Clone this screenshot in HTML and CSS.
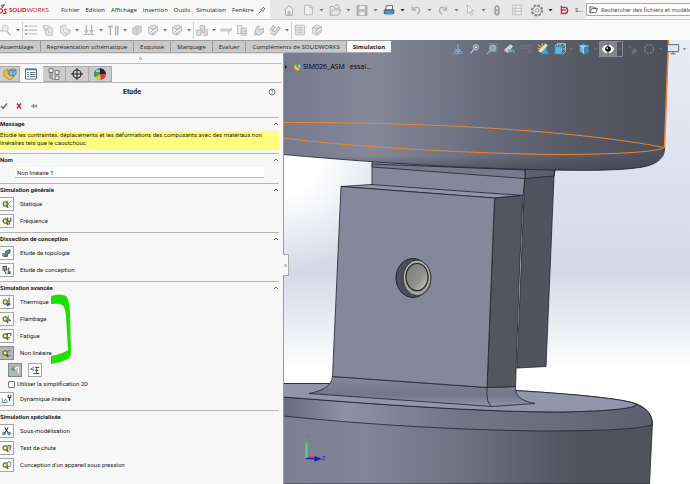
FILE: index.html
```html
<!DOCTYPE html>
<html lang="fr">
<head>
<meta charset="utf-8">
<title>SOLIDWORKS - Simulation</title>
<link rel="stylesheet" href="styles.css">
</head>
<body>
<svg class="defs" aria-hidden="true">
  <symbol id="caret" viewBox="0 0 8 8"><path d="M2 3h4L4 5.500z" fill="currentColor"/></symbol>
  <symbol id="chev" viewBox="0 0 6 6"><path d="M1 4l2-2 2 2" fill="none" stroke="#555" stroke-width=".9"/></symbol>
  <symbol id="cube" viewBox="0 0 16 16"><path d="M3 6l4-3 6 1v6l-5 4-5-2z" fill="#d3d3d3" stroke="#c4c4c4"/><path d="M3 6l5 1 5-3M8 7v7" fill="none" stroke="#b8b8b8" stroke-width=".7"/></symbol>
  <symbol id="cubetool" viewBox="0 0 16 16"><path d="M3 5l5-3 5 2v6l-5 4-5-2z" fill="#e4e4e4" stroke="#bbb"/><path d="M3 5l5 2 5-3M8 7v7" fill="none" stroke="#b4b4b4"/><path d="M6 10l6-5 1.500 2-6 5z" fill="#f8f8f8" stroke="#a4a4a4" stroke-width=".8"/></symbol>
  <symbol id="mag" viewBox="0 0 14 14"><circle cx="5.500" cy="7" r="2.500" fill="#e8ef63" stroke="#525d20" stroke-width="1.200"/><path d="M7 9l2 2.500" stroke="#394028" stroke-width="1.500"/></symbol>
</svg>
<div class="app">
  <header class="titlebar">
    <div class="brand">
      <svg class="ds" viewBox="0 0 8 12"><path d="M1 2l3-1-2 3M0 5c4-1 3 5-1 4M7 5c-4 0-2 2-1 3s-1 2-3 1" fill="none" stroke="#c8242f" stroke-width="1.100"/></svg>
      <span class="name"><b>SOLID</b>WORKS</span>
    </div>
    <nav class="menu">
      <a href="#">Fichier</a><a href="#">Edition</a><a href="#">Affichage</a><a href="#">Insertion</a><a href="#">Outils</a><a href="#">Simulation</a><a href="#">Fenêtre</a>
    </nav>
    <svg class="pin" viewBox="0 0 8 8"><path d="M1 7l2.500-2.500M2.500 3l2.500 2.500M3 3.500L5.500 1.500M4.500 5L6.800 2.800M5 1l2 2" stroke="#666" fill="none"/></svg>
    <div class="quick">
      <button class="ib" aria-label="Accueil"><svg viewBox="0 0 16 16"><path d="M2.500 8L8 3l5.500 5M4 8v6h8V8M7 14v-4h2v4" fill="#eee" stroke="#a4a4a4"/></svg></button>
      <span class="space"></span>
      <button class="ib" aria-label="Nouveau"><svg viewBox="0 0 16 16"><path d="M4 2.500h6l3 3v8H4zM10 2.500v3h3" fill="#efefef" stroke="#b0b0b0"/></svg></button><svg class="ca"><use href="#caret"/></svg>
      <button class="ib" aria-label="Ouvrir"><svg viewBox="0 0 16 16"><path d="M2.500 14V4h4l1 2h5v2M2.500 14l3-6h9l-3 6zM8 3c4-2 5 0 5 3" fill="none" stroke="#a8a8a8"/></svg></button><svg class="ca"><use href="#caret"/></svg>
      <button class="ib" aria-label="Enregistrer"><svg viewBox="0 0 16 16"><path d="M2.500 3h11v11h-11z" fill="#b9b9b9" stroke="#999"/><path d="M5 3h6v4H5zM5 10h6v4H5z" fill="#eee"/></svg></button><svg class="ca"><use href="#caret"/></svg>
      <button class="ib" aria-label="Imprimer"><svg viewBox="0 0 16 16"><path d="M5 3h7v5H4z" fill="#fff" stroke="#555"/><path d="M2.500 8h11v4h-11z" fill="#5795b6" stroke="#304f61"/><path d="M4 12h9l-1 2H3z" fill="#80c6dc"/></svg></button><svg class="ca dark"><use href="#caret"/></svg>
      <button class="ib" aria-label="Annuler"><svg viewBox="0 0 16 16"><path d="M4 4v4h4M4 8c2-4 8-4 8 0 0 2-1 4-3 5" fill="none" stroke="#b2b2b2" stroke-width="1.600"/></svg></button><svg class="ca"><use href="#caret"/></svg>
      <button class="ib" aria-label="Rétablir"><svg viewBox="0 0 16 16"><path d="M12 4v4H8M12 8C10 4 4 4 4 8c0 2 1 4 3 5" fill="none" stroke="#b2b2b2" stroke-width="1.600"/></svg></button><svg class="ca"><use href="#caret"/></svg>
      <button class="ib" aria-label="Sélectionner"><svg viewBox="0 0 16 16"><path d="M5 2v10l2.500-2 2 4 1.500-1-2-4h3z" fill="#f4f4f4" stroke="#b0b0b0"/></svg></button><svg class="ca"><use href="#caret"/></svg>
      <button class="ib" aria-label="Reconstruire"><svg viewBox="0 0 16 16"><rect x="5.500" y="3" width="5" height="11" rx="2.500" fill="#aaa" stroke="#999"/><circle cx="8" cy="6" r="1.300" fill="#ddd"/><circle cx="8" cy="10.500" r="1.300" fill="#ddd"/></svg></button>
      <button class="ib gap" aria-label="Propriétés"><svg viewBox="0 0 16 16"><path d="M3 2.500h10v11H3zM3 6h10M3 9.500h10M6 3v10" fill="#eee" stroke="#bcbcbc"/></svg></button>
      <button class="ib gap" aria-label="Options"><svg viewBox="0 0 16 16"><circle cx="8" cy="8.500" r="6" fill="none" stroke="#777" stroke-width="1.800" stroke-dasharray="2.600 2.110"/><circle cx="8" cy="8.500" r="4.900" fill="#eee" stroke="#777" stroke-width=".8"/><circle cx="8" cy="8.500" r="2.100" fill="#fff" stroke="#777" stroke-width=".8"/></svg></button><svg class="ca dark"><use href="#caret"/></svg>
      <button class="ib" aria-label="Mises à jour"><svg viewBox="0 0 16 16"><path d="M5 5h4c4 0 4 7 0 7H5zM7 8h3M5 3v5h4" fill="none" stroke="#c9303b" stroke-width="1.600"/><path d="M10 5c3 2 3 5 0 7" fill="none" stroke="#555" stroke-width=".8"/></svg></button>
      <span class="doc">S...</span>
    </div>
    <label class="search">
      <svg viewBox="0 0 10 10"><path d="M1 8.500V2h3l1 1.200h3V4M1 8.500L3 4h6.500L7.500 8.500z" fill="#fff" stroke="#444" stroke-width=".9"/></svg>
      <input type="text" aria-label="Recherche" placeholder="Rechercher des fichiers et modèles">
    </label>
  </header>

  <div class="ribbon">
    <button class="ib first" aria-label="Conseiller"><svg viewBox="0 0 16 16"><circle cx="7" cy="6" r="3.500" fill="#eee" stroke="#bbb"/><path d="M9 9l4 5M1 9h4" stroke="#bbb" stroke-width="1.500"/></svg></button><svg class="ca"><use href="#caret"/></svg>
    <i class="bar"></i>
    <button class="ib" aria-label="Liste"><svg viewBox="0 0 16 16"><path d="M1 3.500h3M1 8h3M1 12.500h3" stroke="#aaa" stroke-width="2"/><path d="M5.500 3.500H15M5.500 8H15M5.500 12.500H15" stroke="#c4c4c4" stroke-width="1.500"/></svg></button>
    <button class="ib sp" aria-label="Appliquer"><svg viewBox="0 0 16 16"><path d="M3 3h5l5 3v8H6z" fill="#e8e8e8" stroke="#bbb"/><path d="M2 4l4 5 3-4M8 10l3 1" stroke="#aaa" fill="none"/></svg></button>
    <button class="ib sp" aria-label="Pièce"><svg viewBox="0 0 16 16"><path d="M3 4l4-2 2 1v4l5 1v3l-6 4-5-4z" fill="#ececec" stroke="#bbb"/><path d="M3 4l3 2v4l3 2 5-4M9 12v3" fill="none" stroke="#c4c4c4"/></svg></button><svg class="ca"><use href="#caret"/></svg>
    <button class="ib" aria-label="Chargements"><svg viewBox="0 0 16 16"><path d="M5 2v9M11 2v9M3 8l2 3 2-3M9 8l2 3 2-3M2 13h12" fill="none" stroke="#b5b5b5" stroke-width="1.400"/></svg></button><svg class="ca"><use href="#caret"/></svg>
    <button class="ib" aria-label="Déplacements"><svg viewBox="0 0 16 16"><path d="M2 4h6M5 4v10M11 3v11M13.500 3v11" stroke="#b0b0b0" stroke-width="1.600"/></svg></button><svg class="ca"><use href="#caret"/></svg>
    <button class="ib" aria-label="Connexions"><svg><use href="#cube"/></svg></button>
    <button class="ib" aria-label="Coque"><svg><use href="#cubetool"/></svg></button><svg class="ca"><use href="#caret"/></svg>
    <button class="ib" aria-label="Maillage"><svg><use href="#cubetool"/></svg></button><svg class="ca"><use href="#caret"/></svg>
    <i class="bar"></i>
    <button class="ib" aria-label="Exécuter"><svg viewBox="0 0 16 16"><path d="M2 8h5v6H2zM6 3h5v8H8V7H6zM10 7h4v7H9" fill="#ddd" stroke="#b5b5b5"/></svg></button><svg class="ca"><use href="#caret"/></svg>
    <button class="ib" aria-label="Résultats"><svg viewBox="0 0 16 16"><path d="M2 7h10l2-1v3H2zM11 9v4" fill="#ddd" stroke="#bbb"/></svg></button>
    <button class="ib" aria-label="Comparer"><svg viewBox="0 0 16 16"><path d="M3 3h5v9H3zM7 6h6v8H7zM9 9h3v3H9z" fill="#eee" stroke="#b5b5b5"/></svg></button>
    <button class="ib sp" aria-label="Déformée"><svg viewBox="0 0 16 16"><path d="M3 12l2-7 3-2v5l5-2v5l-5 3zM2 14l4-1" fill="#ddd" stroke="#aaa"/></svg></button>
    <button class="ib" aria-label="Tracés"><svg viewBox="0 0 16 16"><path d="M2 8l4-5 2 2-3 4 3 1 4-6 2 2-6 8-5-2" fill="#ddd" stroke="#a5a5a5"/></svg></button><svg class="ca"><use href="#caret"/></svg>
    <i class="bar"></i>
    <button class="ib" aria-label="Rapport"><svg viewBox="0 0 16 16"><path d="M3 2.500h10v11H3zM5 5h6M5 7h6M5 9h6M5 11h6M2 4h2M2 7h2M2 10h2" fill="#eee" stroke="#b5b5b5"/></svg></button>
    <button class="ib sp" aria-label="Inclure l'image"><svg><use href="#cubetool"/></svg></button>
  </div>

  <div class="work">
    <nav class="tabs">
      <a href="#">Assemblage</a><a href="#">Représentation schématique</a><a href="#">Esquisse</a><a href="#">Marquage</a><a href="#">Evaluer</a><a href="#">Compléments de SOLIDWORKS</a><a href="#" class="on">Simulation</a>
    </nav>

    <aside class="panel">
      <div class="grip"><i></i></div>
      <div class="ptabs">
        <button aria-label="Arbre"><svg viewBox="0 0 14 14"><path d="M1 4l4-2v5l3 1 3-1v3l-4 3-6-4z" fill="#eec53e" stroke="#9c7c19" stroke-width=".7"/><path d="M6 3l4-1 3 1v4l-3 2-4-1z" fill="#83c0d8" stroke="#38708a" stroke-width=".7"/><path d="M6 3l4 1 3-1M10 4v5" fill="none" stroke="#38708a" stroke-width=".6"/></svg></button>
        <button class="on" aria-label="Propriétés"><svg viewBox="0 0 14 14"><path d="M1.500 2h11v10h-11z" fill="#fff" stroke="#55728a"/><path d="M1.500 2.500h11" stroke="#55728a" stroke-width="1.500"/><path d="M3 5.500h2M3 7.500h2M3 9.500h2" stroke="#3b8fc0"/><path d="M6 5.500h5.500M6 7.500h5.500M6 9.500h5.500" stroke="#65747e"/></svg></button>
        <button aria-label="Configurations"><svg viewBox="0 0 14 14"><path d="M2 1.500h4v4H2zM8 3.500h4v4H8zM8 9h4v3.500H8zM3 6v5M5 6v6h3M3 11h2" fill="#e8e8e8" stroke="#777"/></svg></button>
        <button aria-label="Cotation"><svg viewBox="0 0 14 14"><circle cx="7" cy="7" r="4" fill="none" stroke="#222" stroke-width="1.100"/><path d="M7 1v12M1 7h12" stroke="#222"/></svg></button>
        <button aria-label="Apparence"><svg viewBox="0 0 14 14"><circle cx="7" cy="7" r="5.800" fill="#2f65b5"/><path d="M7 7V1.200A5.800 5.800 0 0 1 12.800 7z" fill="#252525"/><path d="M7 7h5.800A5.800 5.800 0 0 1 8 12.700z" fill="#d63d36"/><path d="M7 7l1 5.700A5.800 5.800 0 0 1 2 10z" fill="#e9c22e"/><path d="M7 7L2 10A5.800 5.800 0 0 1 3 3z" fill="#3d9f48"/><ellipse cx="5" cy="4" rx="2" ry="1.300" fill="#b2d4ee"/></svg></button>
      </div>
      <div class="ptitle"><h1>Etude</h1><button aria-label="Aide"><svg viewBox="0 0 8 8"><circle cx="4" cy="4" r="3" fill="#fff" stroke="#49677a" stroke-width=".8"/><path d="M3 3.200c0-1.400 2-1.400 2 0 0 .8-1 .7-1 1.600M4 5.400v.7" stroke="#49677a" stroke-width=".8" fill="none"/></svg></button></div>
      <div class="confirm">
        <button aria-label="OK"><svg viewBox="0 0 8 8"><path d="M1 4l2 2.500L7 1.500" fill="none" stroke="#378c2b" stroke-width="1.300"/></svg></button>
        <button aria-label="Annuler"><svg viewBox="0 0 8 8"><path d="M2 1.500l4 5M6 1.500l-4 5" stroke="#c22a25" stroke-width="1.400"/></svg></button>
        <button aria-label="Garder visible"><svg viewBox="0 0 8 8"><path d="M1 4h2.500M3.500 2v4M3.500 4h3M6.500 2.500v3" stroke="#666" stroke-width=".9" fill="none"/></svg></button>
      </div>

      <section><h2>Message<svg><use href="#chev"/></svg></h2>
        <p class="msg">Etudie les contraintes, déplacements et les déformations des composants avec des matériaux non linéraires tels que le caoutchouc</p></section>
      <section><h2><label for="nom">Nom</label><svg><use href="#chev"/></svg></h2>
        <input id="nom" class="nom" type="text" value="Non linéaire 1"></section>
      <section><h2>Simulation générale<svg><use href="#chev"/></svg></h2>
        <button class="row"><svg viewBox="0 0 14 14"><use href="#mag"/><path d="M8 3v8M8 7l4-3M9 7l3 3" stroke="#397c96" fill="none"/></svg>Statique</button>
        <button class="row"><svg viewBox="0 0 14 14"><use href="#mag"/><path d="M8.500 3v3.500q2 2 3.500 0V3M10.300 7v4" stroke="#343b46" stroke-width="1.200" fill="none"/></svg>Fréquence</button></section>
      <section><h2>Dissection de conception<svg><use href="#chev"/></svg></h2>
        <button class="row"><svg viewBox="0 0 14 14"><path d="M6 5l5-2v4l-3 1v3H5z" fill="#578e9f" stroke="#354c57"/><path d="M2.500 7.500l3 1-1 3-2-1z" fill="#b3bd99" stroke="#566"/></svg>Etude de topologie</button>
        <button class="row"><svg viewBox="0 0 14 14"><path d="M3 3h4v4H3zM4 7l3 5M9 5h2M9 5v6h3M11 8v3" fill="#aaa" stroke="#4b5055" stroke-width="1.200"/></svg>Etude de conception</button></section>
      <section><h2>Simulation avancée<svg><use href="#chev"/></svg></h2>
        <button class="row"><svg viewBox="0 0 14 14"><use href="#mag"/><path d="M10 2v6" stroke="#2c6297" stroke-width="1.500"/><circle cx="10" cy="9.500" r="1.500" fill="#2c6297"/></svg>Thermique</button>
        <button class="row"><svg viewBox="0 0 14 14"><use href="#mag"/><path d="M9 3v4l3 2M8 9h4" stroke="#397c96" stroke-width="1.200" fill="none"/></svg>Flambage</button>
        <button class="row"><svg viewBox="0 0 14 14"><use href="#mag"/><path d="M8 7V4h4v3M8 9h3" stroke="#345f79" stroke-width="1.200" fill="none"/></svg>Fatigue</button>
        <button class="row on"><svg viewBox="0 0 14 14"><use href="#mag"/><path d="M8 8c0-3 1-4 4-4M9 10h3" stroke="#4d7f90" stroke-width="1.200" fill="none"/></svg>Non linéaire</button>
        <div class="sub">
          <button class="on" aria-label="Statique"><svg viewBox="0 0 14 14"><path d="M3 6l3-3M3 6l3 2M3 6h4" stroke="#2e7c9c" fill="none"/><path d="M8 4h3v7M8 4v3" stroke="#eef6fa" stroke-width="1.500" fill="none"/></svg></button>
          <button aria-label="Dynamique"><svg viewBox="0 0 14 14"><path d="M2 6l4-3M2 6l4 2M2 6h4" stroke="#397c96" fill="none"/><path d="M7 4h5M7 7.500h4M5 11h7M9 4v7" stroke="#333" fill="none"/></svg></button>
        </div>
        <label class="check"><input type="checkbox">Utiliser la simplification 2D</label>
        <button class="row"><svg viewBox="0 0 14 14"><path d="M2 6v5h6M4 10l2-3 2 3" stroke="#397c96" fill="none"/><path d="M9 2v3q1.500 1 3 0V2M10.500 5v4" stroke="#333" stroke-width="1.200" fill="none"/></svg>Dynamique linéaire</button>
        <svg class="mark" viewBox="0 0 24 72"><path d="M1 2Q11-1 16 2Q20 7 20 20L21 58Q21 63 18 65Q10 69 1 70V62Q12 60 18 56L16 22Q15 12 12 11Q9 9 1 10z" fill="#20e000"/></svg>
      </section>
      <section><h2>Simulation spécialisée</h2>
        <button class="row"><svg viewBox="0 0 14 14"><path d="M5 3l4 6M9 3L5 9" stroke="#333" stroke-width="1.200"/><circle cx="4" cy="10" r="1.500" fill="#7fb8cf" stroke="#27617c"/><circle cx="10" cy="10" r="1.500" fill="#7fb8cf" stroke="#27617c"/></svg>Sous-modélisation</button>
        <button class="row"><svg viewBox="0 0 14 14"><use href="#mag"/><path d="M8 4h4v4l-2 2" stroke="#555" fill="#bbb"/></svg>Test de chute</button>
        <button class="row"><svg viewBox="0 0 14 14"><use href="#mag"/><rect x="8" y="3" width="4" height="6" rx="2" stroke="#397c96" fill="#eee"/></svg>Conception d'un appareil sous pression</button></section>
      <button class="handle" aria-label="Réduire le panneau"><i></i></button>
    </aside>

    <main class="view">
      <svg class="model" viewBox="284 40 406 444" preserveAspectRatio="xMinYMin slice">
        <defs>
          <linearGradient id="sky" x1="0" y1="0" x2="0" y2="1"><stop offset="0" stop-color="#e9ebf5"/><stop offset=".35" stop-color="#dde0ec"/><stop offset=".52" stop-color="#d5d9e6"/><stop offset=".6" stop-color="#e3e6ef"/><stop offset=".74" stop-color="#fff"/></linearGradient>
          <radialGradient id="glow" gradientUnits="userSpaceOnUse" cx="285" cy="160" r="110"><stop offset="0" stop-color="#fff"/><stop offset=".3" stop-color="#fff"/><stop offset="1" stop-color="#fff" stop-opacity="0"/></radialGradient>
          <linearGradient id="up" gradientUnits="userSpaceOnUse" x1="283" y1="0" x2="668" y2="0"><stop offset="0" stop-color="#777a8d"/><stop offset=".23" stop-color="#858899"/><stop offset=".5" stop-color="#6b6e7f"/><stop offset=".78" stop-color="#565863"/><stop offset="1" stop-color="#4d4f5b"/></linearGradient>
          <linearGradient id="low" gradientUnits="userSpaceOnUse" x1="283" y1="0" x2="652" y2="0"><stop offset="0" stop-color="#7c7f92"/><stop offset=".23" stop-color="#82859a"/><stop offset=".5" stop-color="#6d7080"/><stop offset=".78" stop-color="#52545f"/><stop offset="1" stop-color="#50525c"/></linearGradient>
          <linearGradient id="round" x1="0" y1="0" x2="0" y2="1"><stop offset=".55" stop-color="#40424d" stop-opacity="0"/><stop offset="1" stop-color="#40424d" stop-opacity=".65"/></linearGradient>
          <linearGradient id="rim" gradientUnits="userSpaceOnUse" x1="283" y1="0" x2="652" y2="0"><stop offset="0" stop-color="#686b7c"/><stop offset=".17" stop-color="#8f92a7"/><stop offset=".45" stop-color="#747789"/><stop offset=".75" stop-color="#696c7d"/><stop offset="1" stop-color="#5b5e6c"/></linearGradient>
          <linearGradient id="fil" x1="0" y1="0" x2="0" y2="1"><stop offset="0" stop-color="#84879a"/><stop offset=".6" stop-color="#74778a"/><stop offset="1" stop-color="#9093aa"/></linearGradient>
          <linearGradient id="bore" x1="0" y1="0" x2="1" y2="1"><stop offset="0" stop-color="#777776"/><stop offset=".6" stop-color="#92928f"/><stop offset="1" stop-color="#d0d0cb"/></linearGradient>
        </defs>
        <path d="M283 40h700v444H283z" fill="url(#sky)"/>
        <path d="M283 150h130v125H283z" fill="url(#glow)"/>
        <g stroke="#20222f" stroke-width=".8" stroke-linejoin="round">
          <path d="M372 160L555 168 554 176 525 178.500 523 196 372 186z" fill="#85889b"/>
          <path d="M525 170L555 170 554 176 546 366.500 517 368 521 270z" fill="#51535f"/>
          <path d="M525 169H555L554 176 525 178.500z" fill="#5c5f6d"/>
          <path d="M372 164L525 170V178.500L372 167z" fill="#777a8d"/>
          <path d="M283 40H669L664.500 147C665 160 652 166 640 167.500 615 171 580 170.500 555 170 490 169 400 165 283 154.500z" fill="url(#up)" stroke="none"/>
          <path d="M283 138C340 146 480 155 560 154.500 610 154 650 152 664.500 148 665 160 652 166 640 167.500 615 171 580 170.500 555 170 490 169 400 165 283 154.500z" fill="url(#round)" stroke="none"/>
          <path d="M283 154.500C400 165 490 169 555 170 580 170.500 615 171 640 167.500 654 165 665 160 664.500 148" fill="none"/>
          <path d="M283 383.500H332L516 390.500Q620 397 637 404 651 410 652.500 422L649.500 484H283z" fill="url(#low)"/>
          <path d="M283 397C372 404 480 412 560 412 615 411 636 408 636 404 651 410 652.500 418 652 425 635 430 590 431 540 431 460 430 370 425 283 416z" fill="url(#rim)"/>
          <path d="M283 383.500H332L516 390.500Q620 397 636 404C636 408 615 411 560 412 480 412 372 404 283 397z" fill="#9396ab"/>
          <path d="M332.500 376.500C332 386 322 391 309 393.500L492 406.500 535 403.500C522 401 515 397 515.500 386.500L487 387.500z" fill="url(#fil)"/>
          <path d="M341 186.500L371 184.500 523 195.500 494.500 198z" fill="#9295aa"/>
          <path d="M494.500 198L523 195.500 519.500 270 515.500 386.500 487 387.500z" fill="#53555f"/>
          <path d="M341 186.500L494.500 198 487 387.500 332.500 376.500z" fill="#85889b"/>
          <path d="M487 387.500Q486 404 492 406.500" fill="none"/>
        </g>
        <g fill="none" stroke="#e58a32" stroke-width="1">
          <path d="M283 122.500C430 122 580 131 664 147.500 660 152 610 154.500 560 154.500 480 154 350 147 283 138"/>
          <path d="M668.500 40L664.500 148" stroke-width="1.500"/>
        </g>
        <ellipse cx="413" cy="278" rx="17" ry="19.500" fill="#4b4d5c" stroke="#22242f"/>
        <ellipse cx="417" cy="278" rx="14" ry="18" fill="#888985" stroke="#33352f"/>
        <ellipse cx="417" cy="277.500" rx="12.500" ry="16" fill="none" stroke="#c4c5c0"/>
        <ellipse cx="417" cy="277" rx="11" ry="13.500" fill="url(#bore)" stroke="#292a29" stroke-width="1.200"/>
        <g fill="none" stroke-width="1.500"><path d="M306.500 458V445" stroke="#5ed480" stroke-width="2"/><path d="M305 445l1.500-4 1.500 4z" fill="#4fc873" stroke="none"/><path d="M306 458.500h12M315 457l5 2-5 1.500z" stroke="#1d1db4"/><path d="M309 457h6" stroke="#c64545"/></g>
        <path d="M306 435l1.200 2 1.200-2M307.200 437v2" stroke="#4f8a5e" stroke-width=".7" fill="none"/><path d="M322.500 456.500h2.500l-2.500 3h2.500" stroke="#2b2bd0" stroke-width=".8" fill="none"/>
      </svg>
      <div class="tree"><svg class="arrow" viewBox="0 0 4 6"><path d="M1 1l2 2-2 2z" fill="#111"/></svg><svg class="asm" viewBox="0 0 10 10"><path d="M1 3l3-2v3l2 1 2-1v3L5 9 1 6z" fill="#f0cb42" stroke="#8d7119" stroke-width=".6"/><path d="M5 2l2-1 2 1v3L7 6 5 5z" fill="#88c7df" stroke="#38708a" stroke-width=".6"/></svg><span>SIM026_ASM</span><span>essai...</span></div>
      <div class="hud">
        <button class="ib" aria-label="Vue normale"><svg viewBox="0 0 16 16"><path d="M8 2v9M5 8l3 4 3-4" fill="none" stroke="#6fb1cf" stroke-width="1.500"/><ellipse cx="8" cy="12" rx="5" ry="1.500" fill="none" stroke="#78b8d2"/></svg></button>
        <button class="ib" aria-label="Zoom au mieux"><svg viewBox="0 0 16 16"><circle cx="9" cy="6" r="3" fill="#777" stroke="#ccc"/><path d="M7 8l-4 5" stroke="#bbb" stroke-width="1.500"/><path d="M7.500 6h3M9 4.500v3" stroke="#fff"/></svg></button>
        <button class="ib" aria-label="Zoom fenêtre"><svg viewBox="0 0 16 16"><path d="M5 2h9v9H5z" fill="none" stroke="#9a9ca6" stroke-dasharray="1.500 1"/><circle cx="9" cy="7" r="3.500" fill="#8e9fae" stroke="#b4c5cf"/><path d="M6 10l-4 4" stroke="#68b4d3" stroke-width="1.500"/></svg></button>
        <button class="ib" aria-label="Vue précédente"><svg viewBox="0 0 16 16"><path d="M3 9l7-6 2 2-6 7z" fill="#ccc" stroke="#eee"/><path d="M14 12c-1-4-5-3-7-1M7 11l1-3M7 11h4" fill="none" stroke="#5eb3d3" stroke-width="1.500"/></svg></button>
        <button class="ib" aria-label="Coupe"><svg viewBox="0 0 16 16"><path d="M2 4h12v8h-3V7H2z" fill="#646675" stroke="#747684"/></svg></button>
        <button class="ib" aria-label="Vue dynamique"><svg viewBox="0 0 16 16"><path d="M11 6l4 8H6z" fill="#4ea4c9" stroke="#307c9e"/><path d="M3 10l8-8 2 2-7 8z" fill="#eee2ba" stroke="#ddd"/><path d="M2 3l4 3M2 7l3 1M7 1v4" stroke="#e4ad32" stroke-width="1.300"/></svg></button>
        <button class="ib" aria-label="Orientation"><svg viewBox="0 0 16 16"><path d="M2 5h9v9H2z" fill="#62b6d5" stroke="#2f7b9c"/><path d="M2 5l3-3h9v9l-3 3M5 2v3M11 5l3-3M8 2v3M11 8h3" fill="none" stroke="#c0d2de"/></svg></button><svg class="hc"><use href="#caret"/></svg>
        <button class="ib" aria-label="Style d'affichage"><svg viewBox="0 0 16 16"><path d="M3 4l4-2 6 2v8l-5 2-5-3z" fill="#73bbd7" stroke="#2d7392"/><path d="M3 4l5 2 5-2M8 6v8" fill="none" stroke="#d6eef7"/><path d="M8 6l5-2v8l-5 2z" fill="#3e8eae"/></svg></button><svg class="hc"><use href="#caret"/></svg>
        <button class="ib eye" aria-label="Masquer ou afficher"><svg viewBox="0 0 16 16"><path d="M1 8c3-7 11-7 14 0-3 7-11 7-14 0z" fill="#fff"/><circle cx="8" cy="8" r="3.200" fill="#111"/><path d="M8 2v12" stroke="#111"/><circle cx="7.200" cy="7" r="1" fill="#ddd"/></svg></button><svg class="hc box"><use href="#caret"/></svg>
        <button class="ib" aria-label="Apparences"><svg viewBox="0 0 16 16"><path d="M4 4l3 3M8 12l3-4 2 2-3 3z" fill="#6b6d79" stroke="#6f717d" stroke-width="1.500"/></svg></button>
        <button class="ib" aria-label="Scène"><svg viewBox="0 0 16 16"><circle cx="8" cy="8" r="5" fill="none" stroke="#777985" stroke-width="2" stroke-dasharray="2.500 1.500"/></svg></button><svg class="hc"><use href="#caret"/></svg>
        <button class="ib" aria-label="Paramètres de vue"><svg viewBox="0 0 16 16"><path d="M1.500 3h13v8h-13z" fill="#dfe6ec" stroke="#555"/><path d="M8 11v2M5 13.500h6" stroke="#555"/></svg></button><svg class="hc"><use href="#caret"/></svg>
      </div>
    </main>
  </div>
</div>
</body>
</html>
```
FILE: styles.css
```css
* { box-sizing: border-box; }
body {
  margin: 0;
  font: 6px/8px "Open Sans", "Noto Sans", sans-serif;
  color: #222;
  background: #f7f7f7;
}
button {
  font: inherit;
  color: inherit;
  background: none;
  border: 0;
  padding: 0;
  display: flex;
  align-items: center;
}
a { color: inherit; text-decoration: none; }
h1, h2, p { margin: 0; }
svg { display: block; flex: none; }
.defs { position: absolute; width: 0; height: 0; }
.app {
  min-height: 100vh;
  display: flex;
  flex-direction: column;
  overflow: hidden;
}

/* title bar */
.titlebar {
  display: flex;
  align-items: center;
  height: 20px;
  border-bottom: 1px solid #ccc;
  background: #f8f8f8;
}
.brand { display: flex; align-items: center; width: 61px; }
.ds { width: 8px; height: 12px; }
.name { color: #c8242f; font: 6px/8px Lato, sans-serif; margin-left: 1px; }
.name b { font-weight: 900; }
.menu { display: flex; gap: 6px; white-space: nowrap; }
.pin { width: 8px; height: 8px; margin: 0 auto; }
.quick {
  align-self: stretch;
  display: flex;
  align-items: center;
  flex: none;
  padding-left: 11px;
  background: #e7e7e7;
  width: 316px;
}
.ib { flex: none; width: 16px; height: 16px; justify-content: center; }
.ib svg { width: 14px; height: 14px; }
.space { width: 3px; }
.gap { margin-left: 4px; }
.ca { width: 11px; height: 8px; color: #777; }
.dark { color: #222; }
.doc { margin-left: 3px; }
.search {
  flex: 0 0 104px;
  display: flex;
  align-items: center;
  gap: 3px;
  height: 13px;
  padding-left: 2px;
  border: 1px solid #aaa;
  border-right: 0;
  background: #fff;
}
.search svg { width: 9px; height: 9px; }
.search input {
  flex: 1;
  min-width: 0;
  border: 0;
  padding: 0;
  height: 9px;
  font: 6px/8px Roboto, sans-serif;
  background: none;
}
.search input::placeholder { color: #555; }

/* command ribbon */
.ribbon {
  display: flex;
  align-items: center;
  height: 20px;
  background: #fafafa;
}
.ribbon .ca { width: 8px; }
.first { margin-left: -2px; }
.sp { margin-left: 1px; }
.bar { width: 1px; height: 17px; background: #ccc; }

/* workspace */
.work {
  flex: 1;
  display: grid;
  grid-template-columns: 284px 1fr;
  grid-template-rows: 13px 1fr;
}
.tabs {
  grid-area: 1 / 1 / 2 / 3;
  justify-self: start;
  z-index: 2;
  display: flex;
  border-top: 1px solid #999;
  border-bottom: 1px solid #aaa;
  background: #c9c9c9;
  line-height: 12px;
  white-space: nowrap;
}
.tabs a { padding: 0 6px; border-right: 1px solid #999; }
.tabs a:first-child { padding-left: 0; }
.tabs .on { background: #fafafa; font-weight: 700; border: 0; }

.panel {
  grid-area: 2 / 1;
  position: relative;
  z-index: 1;
  font-family: Roboto, sans-serif;
  background: #f7f7f7;
  border-right: 1px solid #999;
}
.grip {
  display: grid;
  place-items: center;
  height: 11px;
  margin-right: 2px;
  border-top: 1px solid #ddd;
  border-bottom: 1px solid #bbb;
}
.grip i, .handle i { width: 3px; height: 3px; border: 1px solid #999; border-radius: 50%; }
.ptabs { display: flex; height: 19px; padding-top: 2px; margin-right: 2px; border-bottom: 1px solid #bbb; }
.ptabs button {
  width: 23px;
  justify-content: center;
  background: #ccc;
  border: 1px solid #aaa;
  border-left: 0;
}
.ptabs button:first-child { width: 20px; }
.ptabs .on { background: #f7f7f7; border-color: #f7f7f7; }
.ptabs svg { width: 14px; height: 14px; }
.ptitle { display: flex; align-items: center; height: 17px; padding-right: 7px; }
.ptitle h1 { flex: 1; text-align: center; font-size: 7px; line-height: 10px; padding-right: 4px; }
.ptitle svg { width: 8px; height: 8px; }
.confirm { display: flex; gap: 7px; height: 17px; padding-bottom: 6px; }
.confirm svg { width: 8px; height: 8px; }
section {
  position: relative;
  margin-right: 4px;
  padding: 1px 0 3px;
  border-top: 1px solid #b5b5b5;
}
h2 {
  display: flex;
  justify-content: space-between;
  align-items: center;
  font-size: 6px;
  line-height: 10px;
}
h2 svg { width: 6px; height: 6px; }
.msg { margin-top: 2px; height: 19px; padding-right: 16px; line-height: 8px; background: #ffff7b; }
.nom {
  display: block;
  width: calc(100% - 30px);
  height: 11px;
  margin: 2px 15px;
  padding: 0 2px;
  border: 0;
  border-bottom: 1px solid #bbb;
  font: inherit;
  color: inherit;
  background: #fff;
}
.row { height: 17px; gap: 6px; white-space: nowrap; }
.row svg, .sub button {
  width: 14px;
  height: 14px;
  border: 1px solid #a5a5a5;
  background: #fcfcfc;
}
.row svg { border-left: 0; }
.row.on svg, .sub .on { background: #b5b5b5; border-color: #888; }
.sub { display: flex; align-items: center; gap: 6px; height: 17px; padding-left: 8px; }
.sub svg { width: 12px; height: 12px; }
.check { display: flex; align-items: center; gap: 2px; height: 12px; padding-left: 8px; }
.check input {
  appearance: none;
  width: 7px;
  height: 7px;
  margin: 0;
  border: 1px solid #777;
  border-radius: 1px;
  background: #fff;
}
.mark { position: absolute; left: 50px; top: 12px; width: 24px; height: 72px; }
.handle {
  position: absolute;
  right: -6px;
  top: 201px;
  width: 6px;
  height: 22px;
  justify-content: center;
  background: #f7f7f7;
  border: 1px solid #aaa;
  border-left: 0;
}

/* graphics area */
.view { grid-area: 1 / 2 / 3 / 3; position: relative; overflow: hidden; }
.model { position: absolute; inset: 0; width: 100%; height: 100%; }
.tree {
  position: absolute;
  left: 0;
  top: 22px;
  display: flex;
  align-items: center;
  gap: 1px;
  font-size: 7px;
  line-height: 10px;
  color: #000;
}
.tree .arrow { width: 4px; height: 6px; margin-right: 4px; }
.tree .asm { width: 9px; height: 9px; }
.tree span + span { margin-left: 4px; }
.hud { position: absolute; right: 2px; top: 1px; display: flex; align-items: center; }
.hud .ib { width: 17px; }
.hc { width: 7px; height: 8px; color: #777986; }
.eye { background: #85868b; }
.box { height: 16px; border: 1px solid #888a93; }
```
